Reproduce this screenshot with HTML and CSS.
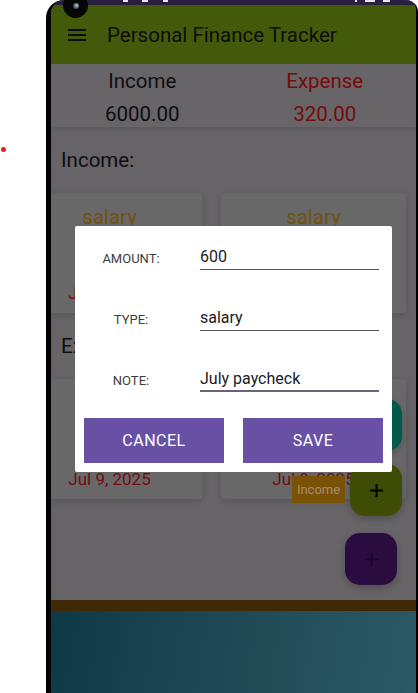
FILE: index.html
```html
<!DOCTYPE html>
<html lang="en">
<head>
<meta charset="utf-8">
<title>Personal Finance Tracker</title>
<link rel="stylesheet" href="styles.css">
</head>
<body>
<span class="dot"></span>
<div class="phone">
  <div class="screen">
    <div class="statusbar">
      <i class="sb s1"></i><i class="sb s2"></i><i class="sb s3"></i><i class="sb s4"></i><i class="sb s5"></i><i class="sb s6"></i>
    </div>
    <header class="appbar">
      <svg class="menu" width="18" height="12" viewBox="0 0 18 12"><path d="M0 1h18M0 6h18M0 11h18" stroke="#0e0e0f" stroke-width="1.8" fill="none"/></svg>
      <h1 class="title">Personal Finance Tracker</h1>
    </header>
    <section class="summary">
      <div class="sum-col"><div>Income</div><div>6000.00</div></div>
      <div class="sum-col expense"><div>Expense</div><div>320.00</div></div>
    </section>
    <h2 class="section-label">Income:</h2>
    <div class="card-row">
      <div class="card income"><div class="card-title">salary</div><div class="card-amount">600.00</div><div class="card-date">Jul 9, 2025</div></div>
      <div class="card income"><div class="card-title">salary</div><div class="card-amount">5400.00</div><div class="card-date">Jul 9, 2025</div></div>
    </div>
    <h2 class="section-label">Expenses:</h2>
    <div class="card-row">
      <div class="card expense"><div class="card-title">food</div><div class="card-amount">120.00</div><div class="card-date">Jul 9, 2025</div></div>
      <div class="card expense"><div class="card-title">rent</div><div class="card-amount">200.00</div><div class="card-date">Jul 9, 2025</div></div>
    </div>
    <div class="spacer"></div>
    <div class="band"></div>
    <div class="bottom"></div>

    <span class="chip chip-expense">Expense</span>
    <div class="fab fab-expense"><svg width="13" height="13" viewBox="0 0 13 13"><path d="M6.5 0v13M0 6.5h13" stroke="#00100c" stroke-width="2"/></svg></div>
    <span class="chip chip-income">Income</span>
    <div class="fab fab-income"><svg width="13" height="13" viewBox="0 0 13 13"><path d="M6.5 0v13M0 6.5h13" stroke="#000" stroke-width="2"/></svg></div>
    <div class="fab fab-main"><svg width="13" height="13" viewBox="0 0 13 13"><path d="M6.5 0v13M0 6.5h13" stroke="#11032a" stroke-width="1.6"/></svg></div>

    <div class="modal-layer">
      <div class="dialog">
        <div class="form">
          <span class="label">AMOUNT:</span><div class="field">600</div>
          <span class="label">TYPE:</span><div class="field">salary</div>
          <span class="label">NOTE:</span><div class="field focused">July paycheck</div>
        </div>
        <div class="actions">
          <button class="btn">CANCEL</button>
          <button class="btn">SAVE</button>
        </div>
      </div>
    </div>
  </div>
  <div class="camera"></div>
</div>
</body>
</html>
```

FILE: styles.css
```css
/* Colours below are the app's colours as seen under the dialog's dimming scrim. */
* {
  box-sizing: border-box;
  margin: 0;
  padding: 0;
}

html, body {
  width: 418px;
  height: 693px;
  overflow: hidden;
}

body {
  background: #ffffff;
  font-family: Roboto, "Noto Sans", sans-serif;
  position: relative;
}

.dot {
  position: absolute;
  left: 1px;
  top: 147px;
  width: 5px;
  height: 5px;
  border-radius: 50%;
  background: #e4221d;
}

.phone {
  position: relative;
  margin-left: 46px;
  width: 372px;
  height: 693px;
  background: #000;
  padding: 0 2px 0 5px;
  border-top-left-radius: 18px;
  border-top-right-radius: 12px;
}

.screen {
  position: relative;
  height: 693px;
  overflow: hidden;
  display: flex;
  flex-direction: column;
  background: #666466;
  color: #0e0e0f;
  border-top-left-radius: 14px;
  border-top-right-radius: 10px;
}

.statusbar {
  height: 5px;
  flex-shrink: 0;
  background: #292042;
  display: flex;
  align-items: flex-start;
  padding-left: 72px;
}

.sb {
  display: block;
  height: 2px;
  background: #e8e8ee;
}
.s1 { width: 5px; }
.s2 { width: 6px; margin-left: 14px; }
.s3 { width: 5px; margin-left: 15px; }
.s4 { width: 2px; margin-left: 187px; }
.s5 { width: 10px; margin-left: 8px; }
.s6 { width: 7px; margin-left: 8px; }

.appbar {
  height: 59px;
  flex-shrink: 0;
  background: #425a0a;
  display: flex;
  align-items: center;
  padding-left: 17px;
  gap: 21px;
}

.menu {
  display: block;
}

.title {
  font-size: 20.5px;
  font-weight: 400;
  color: #0e0e0f;
}

.summary {
  height: 63px;
  flex-shrink: 0;
  display: grid;
  grid-template-columns: 1fr 1fr;
  padding-top: 2px;
  text-align: center;
  font-size: 20.5px;
  line-height: 30px;
  background: #676567;
  box-shadow: 0 2px 5px rgba(0, 0, 0, 0.14);
  position: relative;
  z-index: 1;
}

.sum-col {
  display: flex;
  flex-direction: column;
  gap: 3px;
}

.sum-col.expense {
  color: #770b0b;
}

.section-label {
  flex-shrink: 0;
  font-size: 20.5px;
  font-weight: 400;
  line-height: 30px;
  padding: 18px 10px;
  color: #0e0e0f;
}

.card-row {
  flex-shrink: 0;
  display: flex;
  gap: 19px;
  margin-left: -34px;
}

.card {
  width: 185px;
  height: 120px;
  flex-shrink: 0;
  background: #696869;
  border-radius: 3px;
  box-shadow: 0 2px 7px rgba(0, 0, 0, 0.16);
  display: flex;
  flex-direction: column;
  align-items: center;
  padding-top: 10px;
}

.card-title {
  font-size: 20.5px;
  line-height: 28px;
}

.card-amount {
  font-size: 18px;
  line-height: 28px;
  margin-top: 10px;
}

.card-date {
  font-size: 17px;
  line-height: 24px;
  margin-top: 12px;
  color: #700d0d;
}

.card.income .card-title { color: #70520f; }
.card.income .card-amount { color: #173e19; }
.card.expense .card-title { color: #700d0d; }
.card.expense .card-amount { color: #700d0d; }

.spacer {
  flex: 1;
}

.band {
  height: 11px;
  flex-shrink: 0;
  background: #402905;
}

.bottom {
  height: 82px;
  flex-shrink: 0;
  background: linear-gradient(100deg, #0e3a46 0%, #1f4a55 50%, #2b5a64 100%);
}

.fab {
  position: absolute;
  width: 52px;
  height: 52px;
  border-radius: 15px;
  display: flex;
  align-items: center;
  justify-content: center;
  box-shadow: 0 3px 7px rgba(0, 0, 0, 0.22);
}

.fab svg {
  display: block;
}

.fab-expense {
  left: 299px;
  top: 399px;
  background: #005a4b;
}

.fab-income {
  left: 299px;
  top: 464px;
  background: #3f4c05;
}

.fab-main {
  left: 294px;
  top: 533px;
  background: #2b0c40;
}

.chip {
  position: absolute;
  height: 27px;
  display: flex;
  align-items: center;
  justify-content: center;
  font-size: 13px;
  color: #a68e6a;
  padding: 0 5px;
}

.chip-income {
  left: 241px;
  top: 476px;
  width: 53px;
  background: #7a5205;
}

.chip-expense {
  left: 238px;
  top: 412px;
  background: #005a4b;
}

.modal-layer {
  position: absolute;
  inset: 0;
  z-index: 5;
  display: flex;
  justify-content: center;
  align-items: center;
  padding-top: 5px;
}

.dialog {
  width: 317px;
  height: 246px;
  background: #ffffff;
  border-radius: 2px;
  padding: 12px 9px 9px;
  display: flex;
  flex-direction: column;
}

.form {
  display: grid;
  grid-template-columns: 94px 179px;
  grid-auto-rows: 40px;
  column-gap: 22px;
  row-gap: 21px;
  align-items: center;
}

.label {
  text-align: center;
  font-size: 13px;
  color: #3d3d3d;
}

.field {
  font-size: 16px;
  line-height: 20px;
  padding-top: 1px;
  padding-bottom: 2px;
  border-bottom: 1px solid #555258;
  color: #1c1b1f;
}

.field.focused {
  border-bottom: 2px solid #6b6377;
  padding-bottom: 1px;
}

.actions {
  margin-top: 18px;
  display: flex;
  gap: 19px;
}

.btn {
  width: 140px;
  height: 45px;
  border: none;
  border-radius: 0;
  background: #6851a5;
  color: #ffffff;
  font-family: Roboto, "Noto Sans", sans-serif;
  font-size: 16px;
  font-weight: 400;
  letter-spacing: 0.5px;
}

.camera {
  position: absolute;
  left: 17px;
  top: -7px;
  width: 25px;
  height: 25px;
  border-radius: 50%;
  background: #060606;
  z-index: 10;
}

.camera::after {
  content: "";
  position: absolute;
  left: 10px;
  top: 10px;
  width: 6px;
  height: 6px;
  border-radius: 50%;
  background: radial-gradient(circle at 60% 40%, #c8d4dc 0, #5a6670 45%, #1a1e22 100%);
}
```
